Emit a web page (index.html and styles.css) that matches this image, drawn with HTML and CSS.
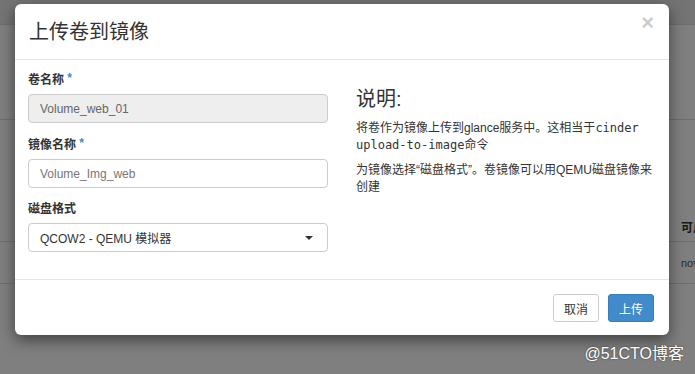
FILE: index.html
```html
<!DOCTYPE html>
<html lang="zh-CN">
<head>
    <meta charset="UTF-8">
    <title>上传卷到镜像</title>
    <link rel="stylesheet" href="styles.css">
</head>
<body>
<div class="page">
    <div class="topbar"></div>
    <div class="toolbar"></div>
    <div class="table-gap"></div>
    <div class="table-row table-head">
        <span class="cell-spacer"></span>
        <span class="cell">可用配额</span>
    </div>
    <div class="table-row">
        <span class="cell-spacer"></span>
        <span class="cell cell-light">nova</span>
    </div>
</div>

<div class="backdrop"></div>

<div class="modal" role="dialog" aria-labelledby="modal-title">
    <header class="modal-header">
        <h1 id="modal-title" class="modal-title">上传卷到镜像</h1>
        <span class="close" aria-label="Close">&times;</span>
    </header>

    <div class="modal-body">
        <form class="form-col">
            <div class="form-group">
                <label class="form-label">卷名称 <span class="req">*</span></label>
                <div class="form-control is-readonly">Volume_web_01</div>
            </div>
            <div class="form-group">
                <label class="form-label">镜像名称 <span class="req">*</span></label>
                <div class="form-control">Volume_Img_web</div>
            </div>
            <div class="form-group">
                <label class="form-label">磁盘格式</label>
                <div class="form-control form-select">
                    <span>QCOW2 - QEMU 模拟器</span>
                    <span class="caret"></span>
                </div>
            </div>
        </form>

        <div class="help-col">
            <h3 class="help-title">说明:</h3>
            <p>将卷作为镜像上传到glance服务中。这相当于<code>cinder upload-to-image</code>命令</p>
            <p>为镜像选择“磁盘格式”。卷镜像可以用QEMU磁盘镜像来创建</p>
        </div>
    </div>

    <footer class="modal-footer">
        <button class="btn btn-default">取消</button>
        <button class="btn btn-primary">上传</button>
    </footer>
</div>

<div class="watermark">@51CTO博客</div>
</body>
</html>
```

FILE: styles.css
```css
html, body {
    height: 100%;
}

body {
    background: #fff;
    color: #333;
    font-family: "Liberation Sans", "Noto Sans CJK SC", sans-serif;
    font-size: 12px;
    margin: 0;
    overflow: hidden;
    position: relative;
}

/* page behind the dialog */
.topbar {
    background: #e8e8e8;
    border-bottom: 1px solid #ddd;
    height: 24px;
}

.toolbar {
    border-bottom: 1px solid #ddd;
    height: 94px;
}

.table-gap {
    height: 92px;
}

.table-row {
    border-bottom: 1px solid #ddd;
    display: flex;
}

.table-head {
    font-weight: bold;
    height: 29px;
}

.table-row + .table-row {
    height: 41px;
}

.cell-spacer {
    flex: 0 0 673px;
}

.cell {
    align-items: center;
    display: flex;
    padding-left: 8px;
    white-space: nowrap;
}

.cell-light {
    color: #555;
    font-size: 11px;
}

.backdrop {
    background: rgba(0, 0, 0, 0.5);
    inset: 0;
    position: absolute;
}

/* dialog */
.modal {
    background: #fff;
    border-radius: 6px;
    box-shadow: 0 5px 15px rgba(0, 0, 0, 0.5);
    left: 15px;
    position: absolute;
    top: 4px;
    width: 654px;
}

.modal-header {
    align-items: center;
    border-bottom: 1px solid #e5e5e5;
    display: flex;
    height: 55px;
    justify-content: space-between;
    padding: 0 15px 0 14px;
}

.modal-title {
    color: #333;
    font-size: 20px;
    font-weight: normal;
    line-height: 22px;
    margin: 0;
}

.close {
    align-self: flex-start;
    color: #000;
    font-size: 22px;
    font-weight: bold;
    line-height: 1;
    margin-top: 8px;
    opacity: 0.2;
}

.modal-body {
    display: flex;
    gap: 28px;
    height: 207px;
    padding: 12px 14px 0 13px;
}

.form-col {
    flex: 0 0 300px;
    margin: 0;
}

.form-group {
    margin-bottom: 13px;
}

.form-group:first-child {
    margin-bottom: 14px;
}

.form-label {
    display: block;
    font-weight: bold;
    line-height: 17px;
    margin-bottom: 5px;
}

.req {
    color: #428bca;
    font-size: 12px;
    line-height: 12px;
    vertical-align: top;
}

.form-control {
    align-items: center;
    background: #fff;
    border: 1px solid #ccc;
    border-radius: 4px;
    box-sizing: border-box;
    color: #777;
    display: flex;
    height: 29px;
    padding: 0 11px;
}

.form-control.is-readonly {
    background: #eee;
    color: #666;
}

.form-select {
    color: #333;
    justify-content: space-between;
    padding-right: 14px;
}

.caret {
    border-left: 4px solid transparent;
    border-right: 4px solid transparent;
    border-top: 4px solid #333;
    height: 0;
    width: 0;
}

.help-col {
    flex: 1;
    padding-top: 16px;
}

.help-title {
    color: #333;
    font-size: 20px;
    font-weight: normal;
    line-height: 22px;
    margin: 0 0 10px;
}

.help-col p {
    line-height: 17px;
    margin: 0 0 8px;
}

.help-col code {
    font-family: "DejaVu Sans Mono", monospace;
    font-size: 12px;
}

.modal-footer {
    border-top: 1px solid #e5e5e5;
    display: flex;
    gap: 9px;
    justify-content: flex-end;
    padding: 14px 15px 13px;
}

.btn {
    border: 1px solid #ccc;
    border-radius: 3px;
    font-family: inherit;
    font-size: 12px;
    height: 28px;
    padding: 0;
    width: 46px;
}

.btn-default {
    background: #fff;
    color: #333;
}

.btn-primary {
    background: #428bca;
    border-color: #357ebd;
    color: #fff;
}

.watermark {
    bottom: 10px;
    color: #fff;
    font-size: 16px;
    position: absolute;
    right: 11px;
    text-shadow: 0 0 2px rgba(0, 0, 0, 0.6);
}
```
